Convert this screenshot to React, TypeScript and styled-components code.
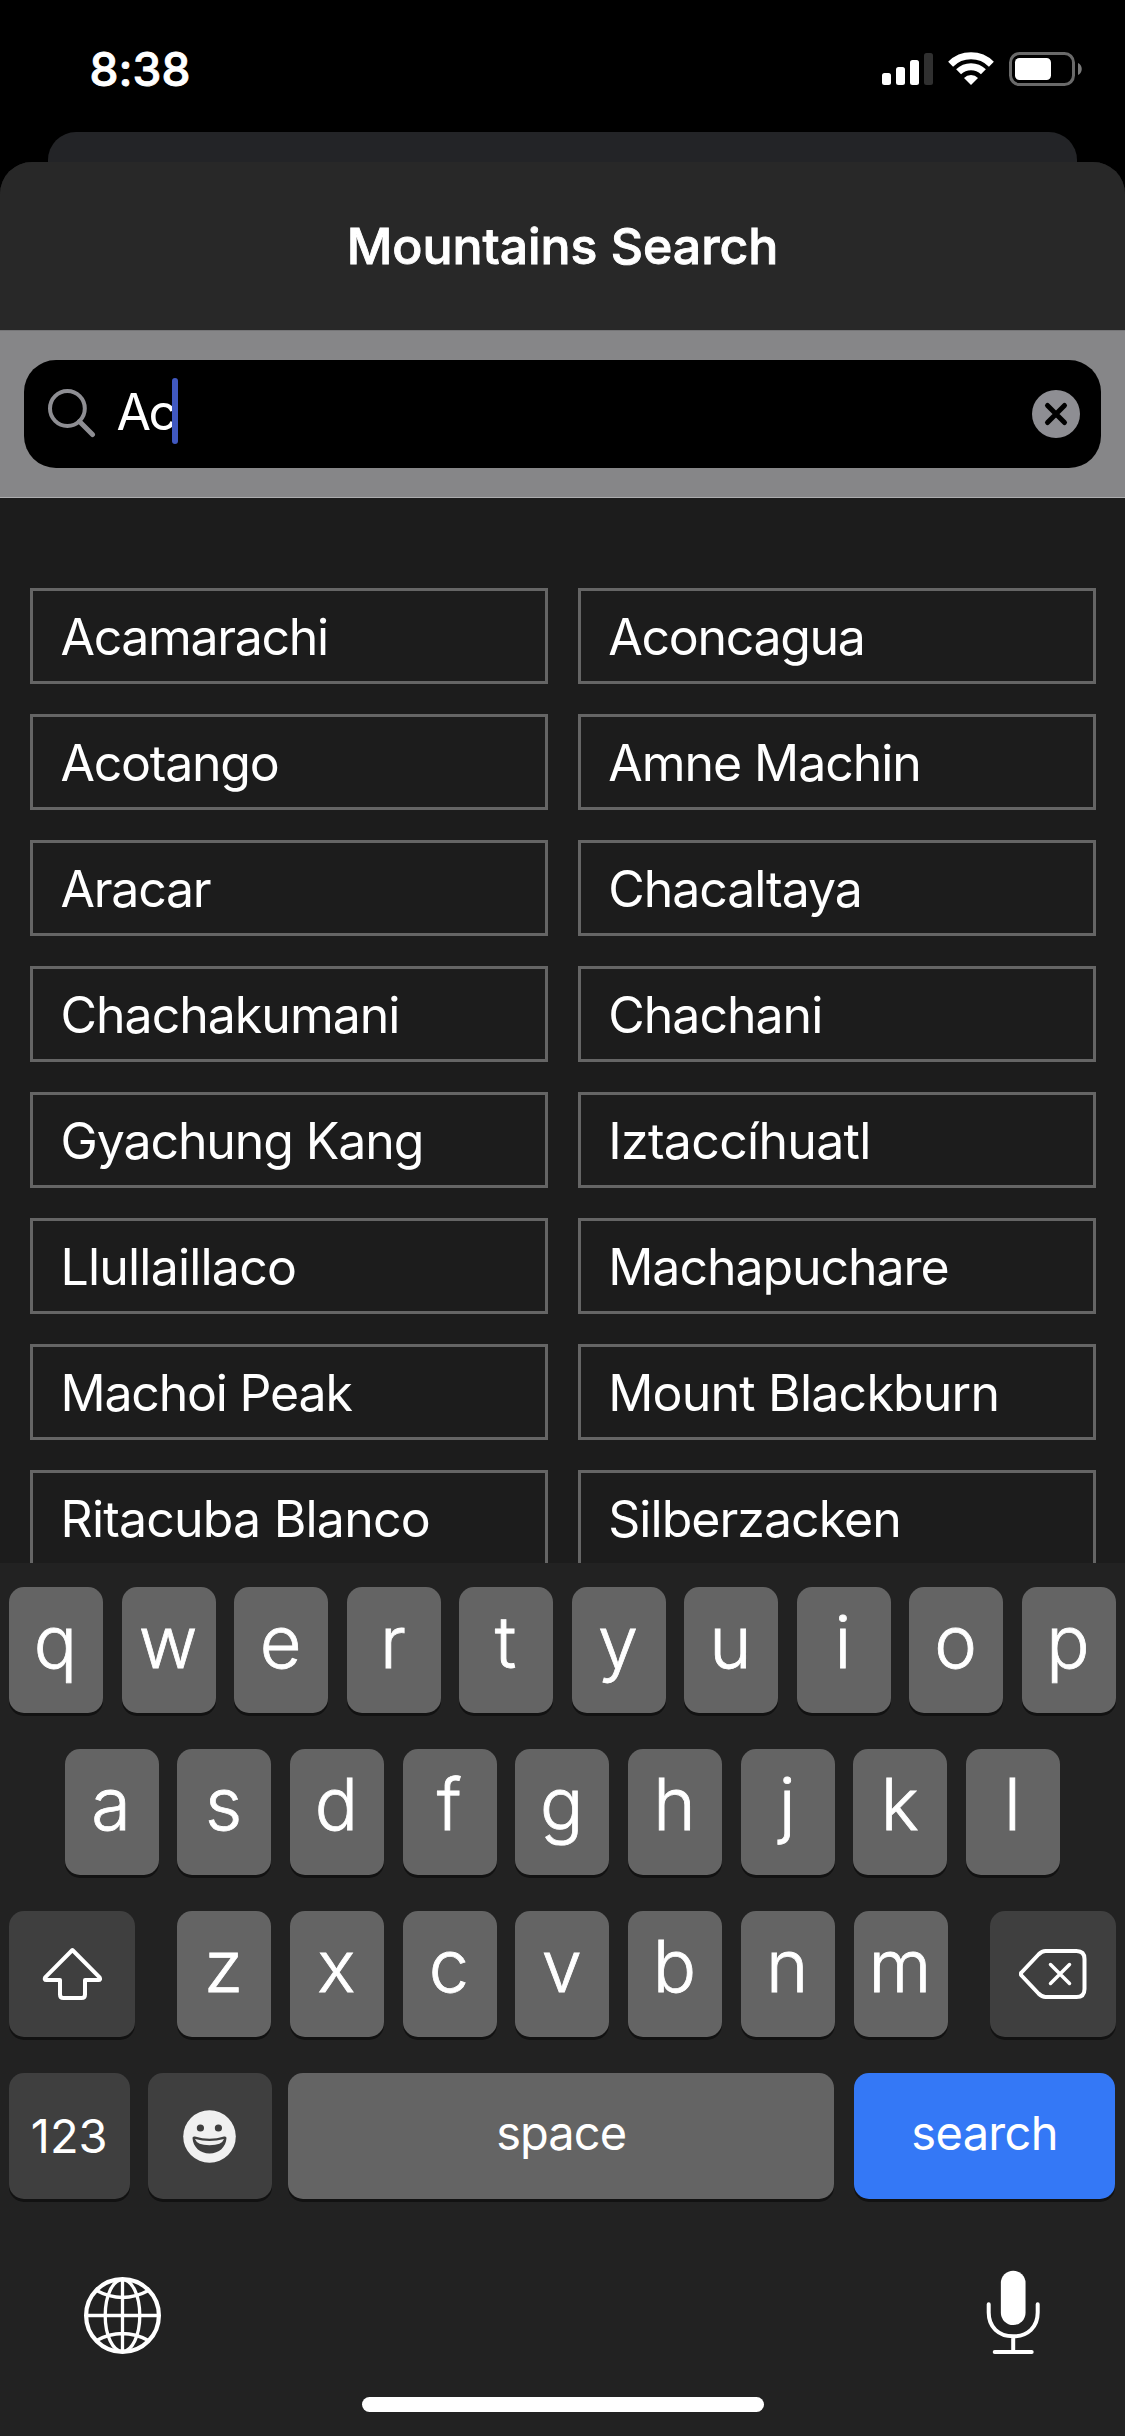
import React from "react";
import styled, { createGlobalStyle } from "styled-components";

const GlobalStyle = createGlobalStyle`
  * { box-sizing: border-box; }
  body {
    margin: 0;
    background: #000;
    color: #fff;
    font-family: Inter, "Liberation Sans", sans-serif;
  }
  svg { display: block; flex: none; }
`;

const Screen = styled.div`
  width: 1125px;
  height: 2436px;
  display: flex;
  flex-direction: column;
  overflow: hidden;
  background: #000;
`;

const StatusBar = styled.div`
  height: 132px;
  flex: none;
  display: flex;
  justify-content: space-between;
  padding: 37px 43px 0 89.5px;
`;

const Clock = styled.div`
  height: 66px;
  line-height: 64px;
  font-size: 46px;
  font-weight: 500;
  letter-spacing: 0.1px;
  -webkit-text-stroke: 0.9px #fff;
`;

const StatusIcons = styled.div`
  display: flex;
  align-items: flex-start;
  padding-top: 15px;
  gap: 15px;
`;

const CardBehind = styled.div`
  height: 30px;
  flex: none;
  margin: 0 48px;
  border-radius: 28px 28px 0 0;
  background: #232427;
`;

const Sheet = styled.div`
  flex: 1;
  min-height: 0;
  display: flex;
  flex-direction: column;
  border-radius: 32px 32px 0 0;
  background: #1c1c1c;
  overflow: hidden;
`;

const Title = styled.h1`
  margin: 0;
  flex: none;
  height: 168px;
  display: flex;
  align-items: center;
  justify-content: center;
  background: #282828;
  font-size: 50px;
  font-weight: 500;
  letter-spacing: -0.05px;
  -webkit-text-stroke: 0.9px #fff;
`;

const SearchStrip = styled.div`
  flex: none;
  height: 168px;
  padding: 29px 24px;
  background: #868688;
  border-top: 1px solid #757577;
  border-bottom: 1px solid #adadaf;
`;

const SearchField = styled.div`
  height: 108px;
  border-radius: 32px;
  background: #000;
  display: flex;
  align-items: center;
  padding: 0 21px 0 24px;
`;

const Query = styled.div`
  flex: 1;
  display: flex;
  align-items: center;
  margin-top: -5px;
  padding-left: 20.5px;
  font-size: 50px;
  line-height: 66px;
  letter-spacing: -2.4px;
`;

const Caret = styled.span`
  width: 6px;
  height: 66px;
  margin: -1px 0 0 -2.5px;
  border-radius: 3px;
  background: #4058c0;
  position: relative;
`;

const Results = styled.div`
  flex: 1;
  min-height: 0;
  overflow: hidden;
  padding: 90px 29.5px 0 30px;
  display: grid;
  grid-template-columns: 1fr 1fr;
  grid-auto-rows: 96px;
  gap: 30px;
`;

const Result = styled.div<{ $tracking: number }>`
  border: 3px solid #656565;
  padding: 0 0 0 27.5px;
  font-size: 50px;
  line-height: 92px;
  white-space: nowrap;
  letter-spacing: ${(p) => p.$tracking}px;
`;

const Keyboard = styled.div`
  flex: none;
  height: 873px;
  background: #222;
  padding: 24px 9.5px 0 9px;
  display: flex;
  flex-direction: column;
  gap: 36px;
`;

const KeyRow = styled.div<{ $inset?: number }>`
  flex: none;
  display: flex;
  justify-content: space-between;
  padding: 0 ${(p) => p.$inset ?? 0}px;
`;

const BottomRow = styled.div`
  flex: none;
  display: grid;
  grid-template-columns: 139.2px 139.8px 565.7px 262px;
`;

const LetterGroup = styled.div`
  width: 770.5px;
  display: flex;
  justify-content: space-between;
`;

type Tone = "light" | "dark" | "blue";
const tones: Record<Tone, string> = { light: "#646464", dark: "#3f3f3f", blue: "#3478f6" };

const Key = styled.div<{ $tone?: Tone; $width?: number }>`
  width: ${(p) => p.$width ?? 94}px;
  height: 126px;
  flex: none;
  border-radius: 15px;
  background: ${(p) => tones[p.$tone ?? "light"]};
  box-shadow: 0 3px 0 #121212;
  display: flex;
  align-items: center;
  justify-content: center;
`;

const LetterKey = styled(Key)`
  padding: 0 1px 17px 0;
  font-size: 72px;
  font-weight: 300;
  -webkit-text-stroke: 0.8px #fff;
`;

const WordKey = styled(Key)<{ $lift?: number; $tracking?: number }>`
  padding-bottom: ${(p) => p.$lift ?? 0}px;
  font-size: 47px;
  font-weight: 400;
  letter-spacing: ${(p) => p.$tracking ?? 0}px;
`;

const Footer = styled.div`
  display: flex;
  justify-content: space-between;
  padding: 35px 65.2px 0 67.9px;
`;

const HomeBar = styled.div`
  width: 402px;
  height: 15px;
  flex: none;
  margin: 0 auto 0 353px;
  border-radius: 8px;
  background: #fff;
`;

const mountains: { name: string; tracking: number }[] = [
  { name: "Acamarachi", tracking: -1.35 },
  { name: "Aconcagua", tracking: -1.3 },
  { name: "Acotango", tracking: -1.25 },
  { name: "Amne Machin", tracking: -1.05 },
  { name: "Aracar", tracking: -1.25 },
  { name: "Chacaltaya", tracking: -1.05 },
  { name: "Chachakumani", tracking: -1 },
  { name: "Chachani", tracking: -1 },
  { name: "Gyachung Kang", tracking: -1.1 },
  { name: "Iztaccíhuatl", tracking: -0.68 },
  { name: "Llullaillaco", tracking: -0.8 },
  { name: "Machapuchare", tracking: -1.05 },
  { name: "Machoi Peak", tracking: -1.2 },
  { name: "Mount Blackburn", tracking: -0.8 },
  { name: "Ritacuba Blanco", tracking: -0.8 },
  { name: "Silberzacken", tracking: -0.97 },
];

const SignalIcon = () => (
  <svg width="51" height="34" viewBox="0 0 51 34" fill="#fff">
    <rect x="0" y="21" width="9" height="12" rx="2.5" />
    <rect x="14" y="15" width="9" height="18" rx="2.5" />
    <rect x="28" y="8" width="9" height="25" rx="2.5" />
    <rect x="42" y="1" width="9" height="32" rx="2.5" fill="#303030" />
  </svg>
);

const WifiIcon = () => (
  <svg width="46" height="34" viewBox="0 0 46 34" fill="none" stroke="#fff" strokeWidth="7">
    <path d="M2.6 12.2A29 29 0 0 1 43.4 12.2" />
    <path d="M10.6 19.8A17.6 17.6 0 0 1 35.4 19.8" />
    <path d="M16 26A9.6 9.6 0 0 1 30 26L23 33Z" fill="#fff" stroke="none" />
  </svg>
);

const BatteryIcon = () => (
  <svg width="73" height="34" viewBox="0 0 73 34">
    <rect x="1.5" y="1.5" width="63" height="31" rx="9" fill="none" stroke="#6a6a6a" strokeWidth="3" />
    <rect x="6" y="6" width="36" height="22" rx="4.5" fill="#fff" />
    <path d="M69 11C74 13 74 21 69 23Z" fill="#7a7a7a" />
  </svg>
);

const SearchIcon = () => (
  <svg width="48" height="50" viewBox="0 0 48 50" fill="none" stroke="#8e8e93" strokeLinecap="round">
    <circle cx="19.400" cy="19.500" r="17.400" strokeWidth="4" />
    <path d="M31.500 32.500L44.500 45.500" strokeWidth="5" />
  </svg>
);

const ClearIcon = () => (
  <svg width="48" height="48" viewBox="0 0 48 48">
    <circle cx="24" cy="24" r="24" fill="#8e8e93" />
    <path d="M15.500 15.500L32.500 32.500M32.500 15.500L15.500 32.500" stroke="#000" strokeWidth="5" strokeLinecap="round" />
  </svg>
);

const ShiftIcon = () => (
  <svg width="60" height="54" viewBox="0 0 60 54" fill="none" stroke="#fff" strokeWidth="4" strokeLinejoin="round">
    <path d="M30.400 3L3.200 30.300Q1.900 33 4.400 33H18V47.500Q18 51 21.500 51H39.500Q43 51 43 47.500V33H56.400Q58.900 33 57.600 30.300Z" />
  </svg>
);

const DeleteIcon = () => (
  <svg width="68" height="52" viewBox="0.5 0 68 52" fill="none" stroke="#fff" strokeWidth="4" strokeLinejoin="round" strokeLinecap="round">
    <path d="M3 24.500Q1.500 26 3 27.500L20 45.500Q23.500 49 27 49H58Q66 49 66 41V11Q66 3 58 3H27Q23.500 3 20 6.500Z" />
    <path d="M32 16.500L51 35.500M51 16.500L32 35.500" strokeWidth="3.500" />
  </svg>
);

const EmojiIcon = () => (
  <svg width="53" height="53" viewBox="0 0 53 53">
    <circle cx="26.500" cy="26.500" r="26.300" fill="#f0f0f0" />
    <circle cx="17.400" cy="18" r="3.600" fill="#3f3f3f" />
    <circle cx="35.400" cy="18" r="3.600" fill="#3f3f3f" />
    <path d="M9.500 28Q9.500 26 12 26.500Q26.500 31 41 26.500Q43.500 26 43.500 28C43 37 36 43.500 26.500 43.500S10 37 9.500 28Z" fill="#3f3f3f" />
    <path d="M12 29Q26.500 33 41 29Q39 35.200 26.500 35.200T12 29Z" fill="#f0f0f0" />
  </svg>
);

const GlobeIcon = () => (
  <svg width="91" height="91" viewBox="-45.5 -45.5 91 91" fill="none" stroke="#fff" strokeWidth="3.3">
    <circle r="36.400" strokeWidth="4.200" />
    <ellipse rx="17.300" ry="36" />
    <path d="M0 -37V37M-37 0H37M-26 -25Q0 -11 26 -25M-26 25Q0 11 26 25" />
  </svg>
);

const MicIcon = () => (
  <svg width="74" height="91" viewBox="0 0 74 91" fill="none" stroke="#fff" strokeWidth="4" strokeLinecap="round">
    <rect x="24.850" y="0.700" width="24.700" height="54.300" rx="12.350" fill="#fff" stroke="none" />
    <path d="M12.700 34.300V42.500C12.700 57 22.500 66.300 37.200 66.300S61.700 57 61.700 42.500V34.300M37.200 67V81M18.700 82H55.700" />
  </svg>
);

const Letters = ({ text }: { text: string }) => (
  <>{text.split("").map((c) => <LetterKey key={c}>{c}</LetterKey>)}</>
);

export default function App() {
  return (
    <Screen>
      <GlobalStyle />
      <StatusBar>
        <Clock>8:38</Clock>
        <StatusIcons>
          <SignalIcon />
          <WifiIcon />
          <BatteryIcon />
        </StatusIcons>
      </StatusBar>
      <CardBehind />
      <Sheet>
        <Title>Mountains Search</Title>
        <SearchStrip>
          <SearchField>
            <SearchIcon />
            <Query>Ac<Caret /></Query>
            <ClearIcon />
          </SearchField>
        </SearchStrip>
        <Results>
          {mountains.map((m) => <Result key={m.name} $tracking={m.tracking}>{m.name}</Result>)}
        </Results>
      </Sheet>
      <Keyboard>
        <KeyRow><Letters text="qwertyuiop" /></KeyRow>
        <KeyRow $inset={55.5}><Letters text="asdfghjkl" /></KeyRow>
        <KeyRow>
          <Key $tone="dark" $width={126}><ShiftIcon /></Key>
          <LetterGroup><Letters text="zxcvbnm" /></LetterGroup>
          <Key $tone="dark" $width={126}><DeleteIcon /></Key>
        </KeyRow>
        <BottomRow>
          <WordKey $tone="dark" $width={120.5} $lift={1}>123</WordKey>
          <Key $tone="dark" $width={123.5}><EmojiIcon /></Key>
          <WordKey $width={546.5} $lift={8} $tracking={-0.9}>space</WordKey>
          <WordKey $tone="blue" $width={261.8} $lift={8} $tracking={-0.7}>search</WordKey>
        </BottomRow>
        <Footer>
          <GlobeIcon />
          <MicIcon />
        </Footer>
        <HomeBar />
      </Keyboard>
    </Screen>
  );
}
